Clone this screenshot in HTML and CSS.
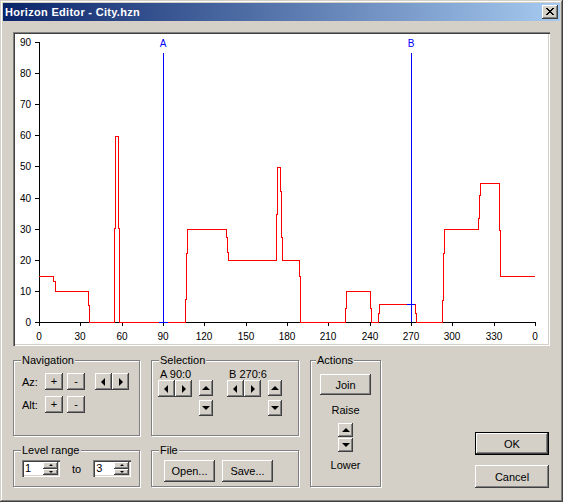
FILE: index.html
```html
<!DOCTYPE html>
<html lang="en">
<head>
    <meta charset="UTF-8">
    <title>Horizon Editor - City.hzn</title>
    <link rel="stylesheet" href="styles.css">
</head>
<body>

<div class="window">
    <div class="titlebar">
        <span class="title">Horizon Editor - City.hzn</span>
        <div class="close">
            <svg width="8" height="7" viewBox="0 0 8 7"><path d="M0 0L7 7M1 0L8 7M7 0L0 7M8 0L1 7" stroke="#000" stroke-width="1"/></svg>
        </div>
    </div>

    <div class="client">
        <!-- Horizon graph -->
        <div class="chart">
            <svg width="533" height="310" viewBox="15 34 533 310" shape-rendering="crispEdges">
                <g stroke="#000" fill="none">
                    <path d="M39 42V322H535"/>
                    <path d="M35 322H39M35 291H39M35 260H39M35 229H39M35 198H39M35 166H39M35 135H39M35 104H39M35 73H39M35 42H39"/>
                    <path d="M39 322V326M80 322V326M122 322V326M163 322V326M204 322V326M246 322V326M287 322V326M328 322V326M370 322V326M411 322V326M452 322V326M494 322V326M535 322V326"/>
                </g>
                <g class="axis-text" text-anchor="end">
                    <text x="31" y="326">0</text>
                    <text x="31" y="295">10</text>
                    <text x="31" y="264">20</text>
                    <text x="31" y="233">30</text>
                    <text x="31" y="202">40</text>
                    <text x="31" y="170">50</text>
                    <text x="31" y="139">60</text>
                    <text x="31" y="108">70</text>
                    <text x="31" y="77">80</text>
                    <text x="31" y="46">90</text>
                </g>
                <g class="axis-text" text-anchor="middle">
                    <text x="39" y="340">0</text>
                    <text x="80" y="340">30</text>
                    <text x="122" y="340">60</text>
                    <text x="163" y="340">90</text>
                    <text x="204" y="340">120</text>
                    <text x="246" y="340">150</text>
                    <text x="287" y="340">180</text>
                    <text x="328" y="340">210</text>
                    <text x="370" y="340">240</text>
                    <text x="411" y="340">270</text>
                    <text x="452" y="340">300</text>
                    <text x="494" y="340">330</text>
                    <text x="535" y="340">0</text>
                </g>
                <polyline fill="none" stroke="#f00" points="39,276 53,276 53,281 55,281 55,291 88,291 88,305 89,305 89,322 114,322 114,228 115,228 115,136 118,136 118,228 119,228 119,322 185,322 185,299 186,299 186,253 187,253 187,229 226,229 226,237 227,237 227,252 228,252 228,260 276,260 276,214 277,214 277,167 280,167 280,191 281,191 281,237 282,237 282,260 299,260 299,276 300,276 300,322 345,322 345,308 346,308 346,291 370,291 370,308 371,308 371,322 378,322 378,313 379,313 379,304 415,304 415,313 416,313 416,322 442,322 442,300 443,300 443,253 444,253 444,229 478,229 478,218 479,218 479,195 480,195 480,183 499,183 499,230 500,230 500,276 535,276"/>
                <!-- selection markers -->
                <g stroke="#00f" fill="none">
                    <path d="M163 53V322M159 322H168"/>
                    <path d="M411 53V322M407 304H415"/>
                </g>
                <g class="marker-text" text-anchor="middle">
                    <text x="163" y="47">A</text>
                    <text x="411" y="47">B</text>
                </g>
            </svg>
        </div>

        <div class="controls">
            <div class="group nav">
                <div class="group-title">Navigation</div>
                <div class="nav-row">
                    <span class="nav-label">Az:</span>
                    <div class="btn pm">+</div>
                    <div class="btn pm">-</div>
                    <div class="btn arrow gap-left"><span class="tri tri-left"></span></div>
                    <div class="btn arrow"><span class="tri tri-right"></span></div>
                </div>
                <div class="nav-row">
                    <span class="nav-label">Alt:</span>
                    <div class="btn pm">+</div>
                    <div class="btn pm">-</div>
                </div>
            </div>

            <div class="group sel">
                <div class="group-title">Selection</div>
                <div class="sel-body">
                    <div class="sel-block">
                        <div class="sel-label">A 90:0</div>
                        <div class="sel-btns">
                            <div class="btn arrow"><span class="tri tri-left"></span></div>
                            <div class="btn arrow"><span class="tri tri-right"></span></div>
                            <div class="updown">
                                <div class="btn ud"><span class="tri tri-up"></span></div>
                                <div class="btn ud"><span class="tri tri-down"></span></div>
                            </div>
                        </div>
                    </div>
                    <div class="sel-block">
                        <div class="sel-label">B 270:6</div>
                        <div class="sel-btns">
                            <div class="btn arrow"><span class="tri tri-left"></span></div>
                            <div class="btn arrow"><span class="tri tri-right"></span></div>
                            <div class="updown">
                                <div class="btn ud"><span class="tri tri-up"></span></div>
                                <div class="btn ud"><span class="tri tri-down"></span></div>
                            </div>
                        </div>
                    </div>
                </div>
            </div>

            <div class="group actions">
                <div class="group-title">Actions</div>
                <div class="btn join">Join</div>
                <div class="act-text raise">Raise</div>
                <div class="btn small-ud"><span class="tri tri-up"></span></div>
                <div class="btn small-ud"><span class="tri tri-down"></span></div>
                <div class="act-text lower">Lower</div>
            </div>

            <div class="dialog-btns">
                <div class="btn default">OK</div>
                <div class="btn">Cancel</div>
            </div>

            <div class="group level">
                <div class="group-title">Level range</div>
                <div class="level-row">
                    <div class="spin-edit">
                        <span class="spin-value">1</span>
                        <div class="spin">
                            <div class="btn spin-btn"><span class="tri tri-up tiny"></span></div>
                            <div class="btn spin-btn"><span class="tri tri-down tiny"></span></div>
                        </div>
                    </div>
                    <span class="to">to</span>
                    <div class="spin-edit">
                        <span class="spin-value">3</span>
                        <div class="spin">
                            <div class="btn spin-btn"><span class="tri tri-up tiny"></span></div>
                            <div class="btn spin-btn"><span class="tri tri-down tiny"></span></div>
                        </div>
                    </div>
                </div>
            </div>

            <div class="group file">
                <div class="group-title">File</div>
                <div class="file-row">
                    <div class="btn file-btn">Open...</div>
                    <div class="btn file-btn">Save...</div>
                </div>
            </div>
        </div>
    </div>
</div>

</body>
</html>
```

FILE: styles.css
```css
/* Win classic dialog */
body {
    margin: 0;
    background-color: #d4d0c8;
    font-family: "Liberation Sans", Arial, sans-serif;
    font-size: 11px;
    color: #000;
}
.window {
    width: 563px;
    height: 502px;
    box-sizing: border-box;
    padding: 3px;
    background-color: #d4d0c8;
    box-shadow: inset -1px -1px #404040, inset 1px 1px #d4d0c8, inset -2px -2px #808080, inset 2px 2px #fff;
    display: flex;
    flex-direction: column;
}
.titlebar {
    height: 18px;
    flex-shrink: 0;
    background: linear-gradient(to right, #0a246a, #a6caf0);
    display: flex;
    align-items: center;
    justify-content: space-between;
    padding: 0 2px 0 2px;
}
.title {
    color: #fff;
    font-weight: bold;
    letter-spacing: 0.3px;
}
.close {
    width: 16px;
    height: 14px;
    background-color: #d4d0c8;
    box-shadow: inset -1px -1px #404040, inset 1px 1px #fff, inset -2px -2px #808080;
    display: flex;
    align-items: center;
    justify-content: center;
}
.close svg {
    display: block;
    margin-top: -1px;
}
.client {
    flex: 1;
    padding: 11px 10px 0 10px;
}

/* Graph */
.chart {
    width: 537px;
    height: 314px;
    box-sizing: border-box;
    padding: 2px;
    background-color: #fff;
    box-shadow: inset 1px 1px #808080, inset 2px 2px #404040, inset -1px -1px #fff, inset -2px -2px #d4d0c8;
}
.chart svg {
    display: block;
}
.axis-text text {
    font-family: "Liberation Sans", Arial, sans-serif;
    font-size: 10px;
    fill: #000;
}
.marker-text text {
    font-family: "Liberation Sans", Arial, sans-serif;
    font-size: 10px;
    fill: #00f;
}

/* Bottom controls */
.controls {
    margin-top: 14px;
    display: grid;
    grid-template-columns: 127px 148px 71px 1fr;
    grid-template-rows: 76px 37px;
    column-gap: 11px;
    row-gap: 14px;
}
.group {
    border: 1px solid #808080;
    box-shadow: 1px 1px 0 #fff, inset 1px 1px 0 #fff;
    display: flex;
    flex-direction: column;
}
.group-title {
    align-self: flex-start;
    margin: -7px 0 0 7px;
    padding: 0 1px;
    line-height: 13px;
    background-color: #d4d0c8;
}
.btn {
    box-sizing: border-box;
    background-color: #d4d0c8;
    box-shadow: inset -1px -1px #404040, inset 1px 1px #fff, inset -2px -2px #808080;
    display: flex;
    align-items: center;
    justify-content: center;
    flex-shrink: 0;
}
.btn.default {
    box-shadow: inset 0 0 0 1px #000, inset -2px -2px #404040, inset 2px 2px #fff, inset -3px -3px #808080;
}
.tri {
    width: 0;
    height: 0;
    border: 4px solid transparent;
}
.tri-left {
    border-right-color: #000;
    border-left-width: 0;
    margin-left: -1px;
}
.tri-right {
    border-left-color: #000;
    border-right-width: 0;
}
.tri-up {
    border-bottom-color: #000;
    border-top-width: 0;
    margin-top: -1px;
}
.tri-down {
    border-top-color: #000;
    border-bottom-width: 0;
}
.tri.tiny {
    border-width: 2px;
    margin-top: 0;
}
.tri-up.tiny {
    border-top-width: 0;
}
.tri-down.tiny {
    border-bottom-width: 0;
}

/* Navigation */
.nav-row {
    display: flex;
    align-items: center;
    padding-left: 8px;
    gap: 4px;
    margin-top: 6px;
}
.nav-row:first-of-type {
    margin-top: 8px;
}
.nav-label {
    width: 19px;
}
.pm {
    width: 18px;
    height: 17px;
    line-height: 1;
}
.arrow {
    width: 17px;
    height: 17px;
}
.nav-row .arrow {
    margin-left: -4px;
}
.nav-row .arrow.gap-left {
    margin-left: 6px;
}

/* Selection */
.sel-body {
    display: flex;
    gap: 14px;
    padding-left: 6px;
}
.sel-label {
    padding-left: 2px;
    line-height: 12px;
    margin-top: 1px;
}
.sel-btns {
    display: flex;
    align-items: flex-start;
}
.updown {
    display: flex;
    flex-direction: column;
    gap: 4px;
    margin-left: 7px;
}
.ud {
    width: 14px;
    height: 16px;
}

/* Actions */
.actions {
    grid-column: 3;
    grid-row: 1 / 3;
    align-items: center;
}
.actions .group-title {
    margin-left: 5px;
}
.join {
    width: 51px;
    height: 21px;
    margin-top: 7px;
}
.act-text {
    line-height: 13px;
}
.raise {
    margin-top: 9px;
    margin-bottom: 6px;
}
.small-ud {
    width: 15px;
    height: 14px;
    margin-bottom: 1px;
}
.lower {
    margin-top: 6px;
}

/* OK / Cancel */
.dialog-btns {
    grid-column: 4;
    grid-row: 1 / 3;
    align-self: end;
    justify-self: end;
    display: flex;
    flex-direction: column;
    gap: 10px;
    margin-right: 1px;
    margin-bottom: -1px;
}
.dialog-btns .btn {
    width: 74px;
    height: 23px;
}

/* Level range */
.level {
    grid-column: 1;
    grid-row: 2;
}
.level-row {
    display: flex;
    align-items: center;
    padding-left: 8px;
    margin-top: 3px;
}
.spin-edit {
    width: 38px;
    height: 17px;
    box-sizing: border-box;
    padding: 2px;
    background-color: #fff;
    box-shadow: inset 1px 1px #808080, inset 2px 2px #404040, inset -1px -1px #fff, inset -2px -2px #d4d0c8;
    display: flex;
}
.spin-value {
    flex: 1;
    padding-left: 1px;
    line-height: 13px;
}
.spin {
    width: 15px;
    display: flex;
    flex-direction: column;
}
.spin-btn {
    flex: 1;
}
.to {
    margin: 0 12px 0 12px;
}

/* File */
.file {
    grid-column: 2;
    grid-row: 2;
}
.file-row {
    display: flex;
    gap: 7px;
    padding-left: 12px;
    margin-top: 3px;
}
.file-btn {
    width: 51px;
    height: 22px;
}
```
